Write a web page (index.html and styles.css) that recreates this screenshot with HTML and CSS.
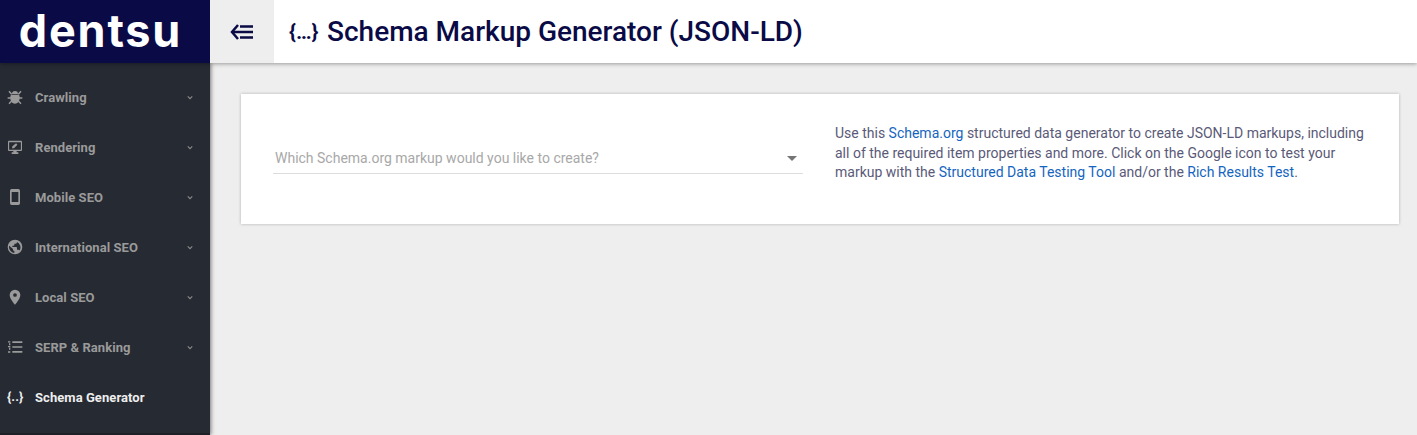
FILE: index.html
```html
<!DOCTYPE html>
<html lang="en">
<head>
  <meta charset="UTF-8">
  <title>Schema Markup Generator (JSON-LD)</title>
  <link rel="stylesheet" href="styles.css">
</head>
<body>
  <header class="topbar">
    <div class="logo">dentsu</div>
    <button class="toggle" aria-label="Collapse menu">
      <svg width="24" height="18" viewBox="0 0 24 18">
        <path d="M8 2 2 9 8 16" fill="none" stroke="#0a0a46" stroke-width="2.500"/>
        <path d="M3 9h20M10 3.500h13M10 14.500h13" fill="none" stroke="#0a0a46" stroke-width="2.500"/>
      </svg>
    </button>
    <h1 class="page-title"><span class="title-icon">{…}</span>Schema Markup Generator (JSON-LD)</h1>
  </header>

  <div class="layout">
    <nav class="sidebar">
      <a class="nav-item" href="#">
        <svg class="nav-icon" viewBox="0 0 24 24">
          <path d="M12 3a4.500 4.500 0 0 0-4.500 4.500h9A4.500 4.500 0 0 0 12 3zM6 8.500h12a9 9 0 0 1 1 5c0 4.800-3 8.500-7 8.500s-7-3.700-7-8.500a9 9 0 0 1 1-5z"/>
          <path d="M7 8 3 3.500M17 8l4-4.500M6 13.500H1M18 13.500h5M7 18l-4 4M17 18l4 4" fill="none" stroke="#9a9a9a" stroke-width="2.200"/>
        </svg>
        <span class="nav-label">Crawling</span>
        <svg class="chevron" viewBox="0 0 8 6"><path d="M1 1.500 4 4.500 7 1.500"/></svg>
      </a>
      <a class="nav-item" href="#">
        <svg class="nav-icon" viewBox="0 0 24 24"><path fill-rule="evenodd" d="M3 2.500h18A1.500 1.500 0 0 1 22.500 4v12.500A1.500 1.500 0 0 1 21 18h-6.500v2H17v2.500H7V20h2.500v-2H3a1.500 1.500 0 0 1-1.500-1.500V4A1.500 1.500 0 0 1 3 2.500zm.2 2.200V16h17.600V4.700zM7.500 14l.6-3 5.500-4.500 2 2L10.500 14z"/></svg>
        <span class="nav-label">Rendering</span>
        <svg class="chevron" viewBox="0 0 8 6"><path d="M1 1.500 4 4.500 7 1.500"/></svg>
      </a>
      <a class="nav-item" href="#">
        <svg class="nav-icon" viewBox="0 0 24 24"><path fill-rule="evenodd" d="M7 0h10a2.500 2.500 0 0 1 2.500 2.500v19A2.500 2.500 0 0 1 17 24H7a2.500 2.500 0 0 1-2.500-2.500v-19A2.500 2.500 0 0 1 7 0zm0 4.500v15h10v-15z"/></svg>
        <span class="nav-label">Mobile SEO</span>
        <svg class="chevron" viewBox="0 0 8 6"><path d="M1 1.500 4 4.500 7 1.500"/></svg>
      </a>
      <a class="nav-item" href="#">
        <svg class="nav-icon" viewBox="0 0 24 24"><path d="M12 1a11 11 0 1 0 0 22 11 11 0 0 0 0-22zm-1 19.900A9 9 0 0 1 3.200 10.200L9 15v1a2 2 0 0 0 2 2zm7.900-3.500A2 2 0 0 0 17 16h-2v-3a1 1 0 0 0-1-1H8v-2h2a1 1 0 0 0 1-1V7h2a2 2 0 0 0 2-2v-.4a9 9 0 0 1 3.900 12.800z"/></svg>
        <span class="nav-label">International SEO</span>
        <svg class="chevron" viewBox="0 0 8 6"><path d="M1 1.500 4 4.500 7 1.500"/></svg>
      </a>
      <a class="nav-item" href="#">
        <svg class="nav-icon" viewBox="0 0 24 24"><path d="M12 1a8 8 0 0 0-8 8c0 6 8 14.500 8 14.500S20 15 20 9a8 8 0 0 0-8-8zm0 10.800a2.800 2.800 0 1 1 0-5.600 2.800 2.800 0 0 1 0 5.600z"/></svg>
        <span class="nav-label">Local SEO</span>
        <svg class="chevron" viewBox="0 0 8 6"><path d="M1 1.500 4 4.500 7 1.500"/></svg>
      </a>
      <a class="nav-item" href="#">
        <svg class="nav-icon" viewBox="0 0 24 24"><path d="M8 3.500h15v2.500H8zM8 10.800h15v2.500H8zM8 18h15v2.500H8zM1.500 3.500h3.500v1.800H1.500zM3 6.500h2v3H3zM3 13h2v3H3zM1.500 10.500h3.500v1.800H1.500zM1.500 18.500h3.500v2H1.500z"/></svg>
        <span class="nav-label">SERP &amp; Ranking</span>
        <svg class="chevron" viewBox="0 0 8 6"><path d="M1 1.500 4 4.500 7 1.500"/></svg>
      </a>
      <a class="nav-item active" href="#">
        <span class="nav-icon text-icon">{..}</span>
        <span class="nav-label">Schema Generator</span>
      </a>
    </nav>

    <main class="content">
      <section class="card">
        <div class="select-col">
          <div class="select">
            <span class="placeholder">Which Schema.org markup would you like to create?</span>
            <span class="caret"></span>
          </div>
        </div>
        <p class="intro">Use this <a href="#">Schema.org</a> structured data generator to create JSON-LD markups, including all of the required item properties and more. Click on the Google icon to test your markup with the <a href="#">Structured Data Testing Tool</a> and/or the <a href="#">Rich Results Test</a>.</p>
      </section>
    </main>
  </div>
</body>
</html>
```

FILE: styles.css
```css
* {
  box-sizing: border-box;
}

html, body {
  height: 100%;
}

body {
  margin: 0;
  background-color: #eee;
  font-family: Roboto, sans-serif;
  overflow: hidden;
}

/* Top bar */
.topbar {
  display: flex;
  align-items: stretch;
  height: 63px;
  background-color: #fff;
  box-shadow: 0 1px 4px rgba(0, 0, 0, 0.35);
  position: relative;
  z-index: 2;
}

.logo {
  width: 210px;
  padding-right: 9px;
  background-color: #0a0a46;
  color: #fff;
  font-family: Inter, sans-serif;
  font-weight: 700;
  font-size: 45px;
  letter-spacing: 1.800px;
  line-height: 62px;
  text-align: center;
}

.toggle {
  width: 64px;
  padding: 0;
  border: none;
  background-color: #eee;
  display: flex;
  align-items: center;
  justify-content: center;
}

.page-title {
  margin: 0 0 0 15px;
  display: flex;
  align-items: center;
  color: #0a0a46;
  font-size: 28px;
  font-weight: 500;
}

.title-icon {
  width: 38px;
  font-size: 21px;
  font-weight: 700;
}

/* Sidebar */
.layout {
  display: flex;
  height: calc(100% - 63px);
}

.sidebar {
  width: 210px;
  flex-shrink: 0;
  padding-top: 9px;
  background-color: #262a33;
  border-bottom: 2px solid #1d2026;
  box-shadow: 1px 0 4px rgba(0, 0, 0, 0.5);
}

.nav-item {
  display: flex;
  align-items: center;
  height: 50px;
  padding: 0 16px 0 7px;
  color: #9a9a9a;
  font-size: 13px;
  font-weight: 700;
  letter-spacing: 0.060px;
  text-decoration: none;
}

.nav-item.active {
  color: #eee;
}

.nav-icon {
  width: 16px;
  height: 16px;
  margin-right: 12px;
  fill: #9a9a9a;
  flex-shrink: 0;
}

.text-icon {
  fill: none;
  font-size: 13px;
  line-height: 16px;
  white-space: nowrap;
}

.nav-label {
  flex: 1;
}

.chevron {
  width: 6px;
  height: 5px;
  margin-right: 1px;
  fill: none;
  stroke: #8a8a8a;
  stroke-width: 1.500;
}

/* Main card */
.content {
  flex: 1;
  padding: 31px 18px 0 31px;
}

.card {
  display: flex;
  align-items: flex-start;
  height: 130px;
  padding: 0 32px;
  background-color: #fff;
  box-shadow: 0 0 3px rgba(0, 0, 0, 0.25);
}

.select-col {
  width: 530px;
  flex-shrink: 0;
  margin-right: 32px;
  padding-top: 49px;
}

.select {
  display: flex;
  align-items: center;
  justify-content: space-between;
  height: 31px;
  padding: 0 6px 0 2px;
  border-bottom: 1px solid #ddd;
}

.placeholder {
  color: #a8a8a8;
  font-size: 14px;
}

.caret {
  width: 0;
  height: 0;
  border-left: 5px solid transparent;
  border-right: 5px solid transparent;
  border-top: 5px solid #757575;
}

.intro {
  margin: 30px 0 0;
  color: #5a5a78;
  font-size: 14px;
  line-height: 19.600px;
}

.intro a {
  color: #1565c0;
  text-decoration: none;
}
```
